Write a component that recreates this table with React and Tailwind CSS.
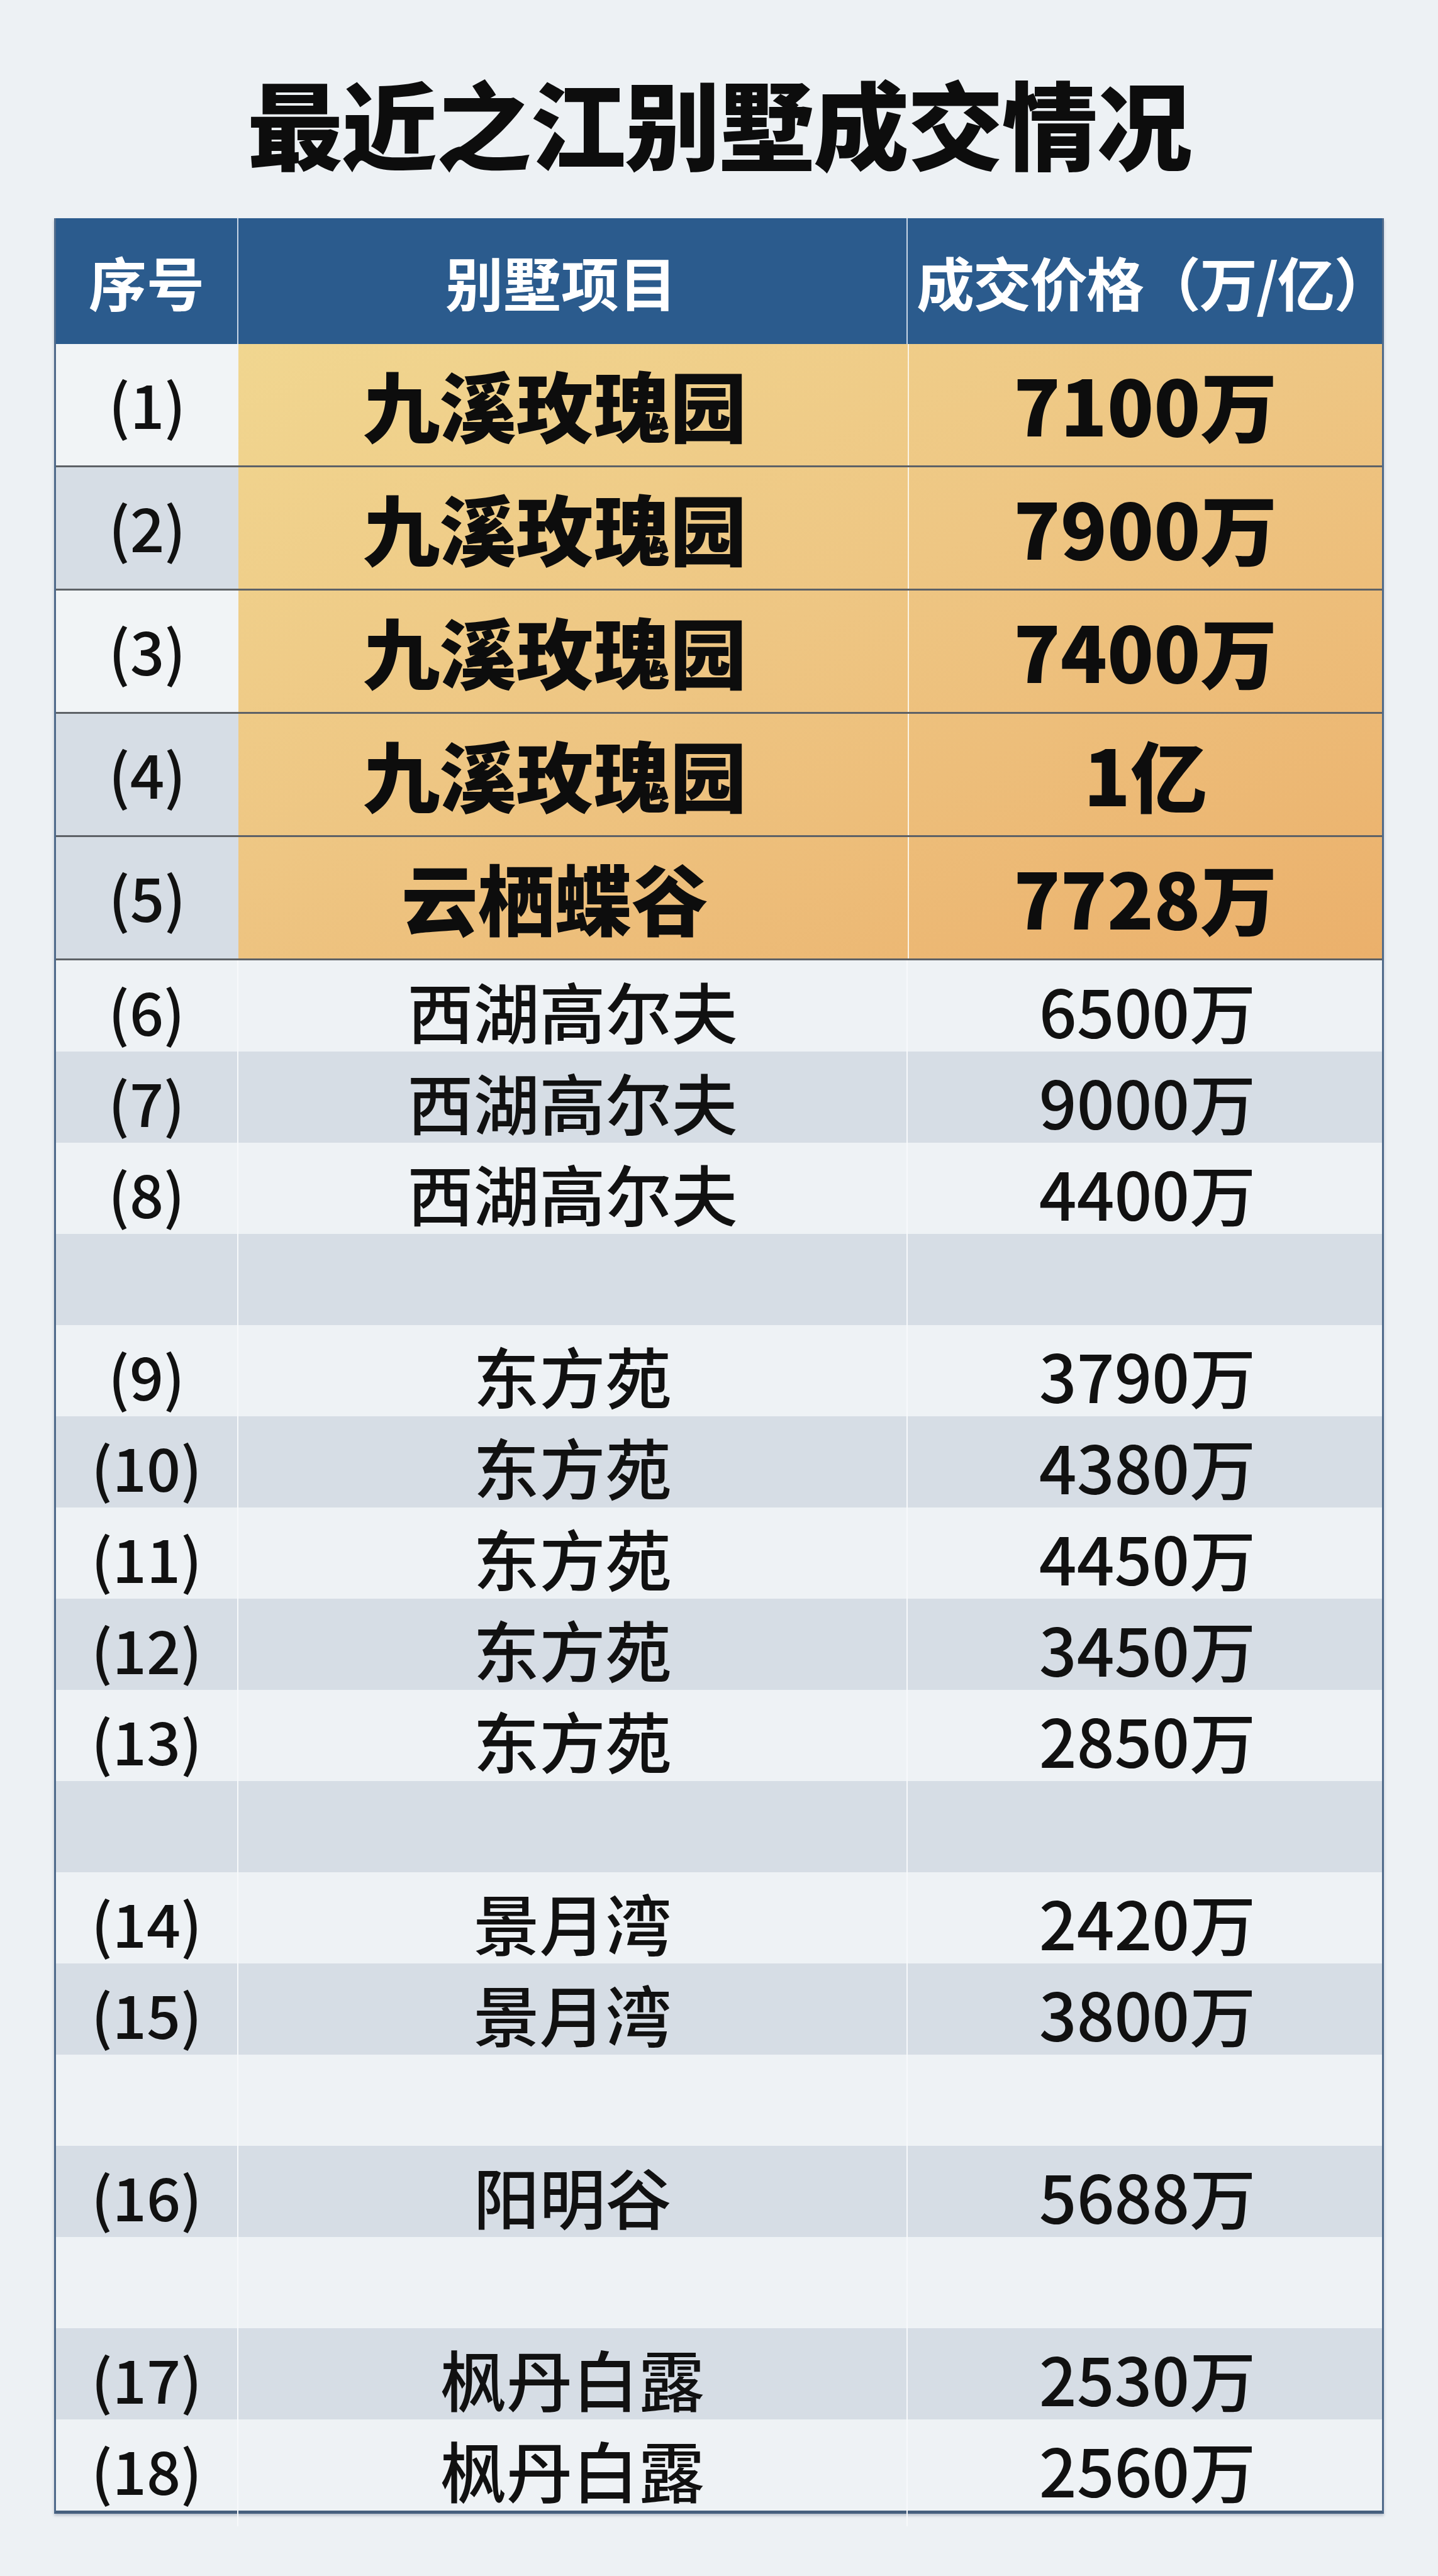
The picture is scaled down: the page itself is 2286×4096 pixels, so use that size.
import React from 'react';

const font = { fontFamily: '"Noto Sans CJK SC", "Noto Sans", sans-serif' };

const topDeals = [
  { no: '(1)', name: '九溪玫瑰园', price: '7100万', gray: false },
  { no: '(2)', name: '九溪玫瑰园', price: '7900万', gray: true },
  { no: '(3)', name: '九溪玫瑰园', price: '7400万', gray: false },
  { no: '(4)', name: '九溪玫瑰园', price: '1亿', gray: true },
  { no: '(5)', name: '云栖蝶谷', price: '7728万', gray: true },
];

// null = empty spacer row between projects
const otherDeals = [
  ['(6)', '西湖高尔夫', '6500万'],
  ['(7)', '西湖高尔夫', '9000万'],
  ['(8)', '西湖高尔夫', '4400万'],
  null,
  ['(9)', '东方苑', '3790万'],
  ['(10)', '东方苑', '4380万'],
  ['(11)', '东方苑', '4450万'],
  ['(12)', '东方苑', '3450万'],
  ['(13)', '东方苑', '2850万'],
  null,
  ['(14)', '景月湾', '2420万'],
  ['(15)', '景月湾', '3800万'],
  null,
  ['(16)', '阳明谷', '5688万'],
  null,
  ['(17)', '枫丹白露', '2530万'],
  ['(18)', '枫丹白露', '2560万'],
];

const cols = 'grid grid-cols-[290px_1064px_1fr]';

const App = () => {
  return (
    <div className="min-h-[4096px] w-full bg-[#edf1f4] pt-[98px]" style={font}>
      <div className="flex h-[190px] items-center justify-center">
        <h1 className="text-[152px] font-black leading-none text-[#0d0d0d] tracking-[-2px]">
          最近之江别墅成交情况
        </h1>
      </div>

      <div className="mx-[86px] mt-[59px] border-x-[3px] border-b-[5px] border-x-[#4f6a8a] border-b-[#46607e] shadow-[0_3px_4px_rgba(40,60,90,0.25)]">
        {/* header */}
        <div className={`${cols} h-[200px] bg-[#2b5b8d] text-white text-[92px] font-bold`}>
          <div className="flex items-center justify-center border-r-2 border-[#c8d6e6]">序号</div>
          <div className="flex items-center justify-center border-r-2 border-[#c8d6e6] pr-[36px]">别墅项目</div>
          <div className="flex items-center justify-center whitespace-nowrap pl-[14px] tracking-[-2px]">成交价格（万/亿）</div>
        </div>

        {/* highlighted top deals */}
        <div className="bg-linear-to-br from-[#f1d992] via-[#eec683] to-[#ebb06b]">
          {topDeals.map((d) => (
            <div key={d.no} className={`${cols} h-[196px] border-b-[3px] border-[#5d6166]`}>
              <div
                className={`flex items-center justify-center pb-[6px] text-[96px] font-medium text-[#111] ${
                  d.gray ? 'bg-[#d6dde5]' : 'bg-[#f1f4f6]'
                }`}
              >
                {d.no}
              </div>
              <div className="flex items-center justify-center pb-[6px] pr-[58px] text-[122px] font-black text-[#0d0d0d]">
                {d.name}
              </div>
              <div className="flex items-center justify-center border-l-2 border-[#fbf3e4] pb-[6px] text-[122px] font-black text-[#0d0d0d]">
                {d.price}
              </div>
            </div>
          ))}
        </div>

        {/* other deals */}
        {otherDeals.map((r, i) => (
          <div
            key={i}
            className={`${cols} h-[145px] text-[105px] font-medium text-[#111] ${
              i % 2 === 0 ? 'bg-[#eef2f5]' : 'bg-[#d6dde5]'
            }`}
          >
            <div className="flex items-center justify-center border-r-2 border-[#f7f9fb] pb-[12px] text-[95px]">
              {r ? r[0] : ''}
            </div>
            <div className="flex items-center justify-center border-r-2 border-[#f7f9fb] pb-[12px]">
              {r ? r[1] : ''}
            </div>
            <div className="flex items-center justify-center pb-[12px] pl-[8px]">{r ? r[2] : ''}</div>
          </div>
        ))}
      </div>
    </div>
  );
};

export default App;
